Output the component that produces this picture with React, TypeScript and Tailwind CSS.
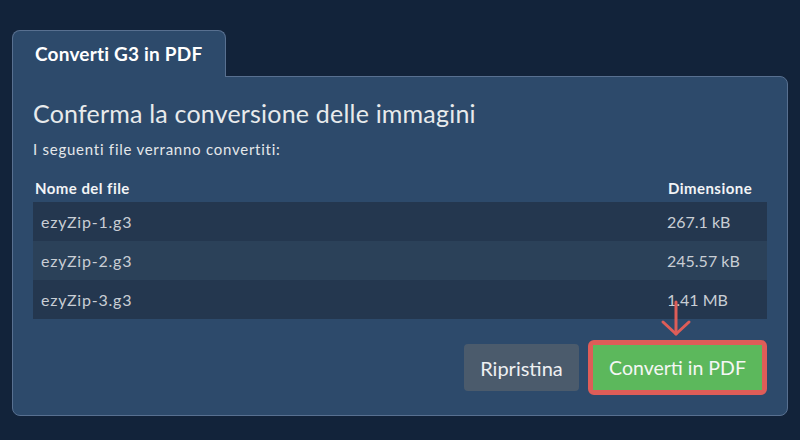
const files = [
  { name: "ezyZip-1.g3", size: "267.1 kB" },
  { name: "ezyZip-2.g3", size: "245.57 kB" },
  { name: "ezyZip-3.g3", size: "1.41 MB" },
];

export default function App() {
  return (
    <div className="h-[440px] w-[800px] bg-[#12233a] px-3 pt-[30px] font-['Lato','Noto_Sans',sans-serif] text-[#e9ecef]">
      <div className="relative z-10 -mb-px flex h-[47px] w-[214px] items-center rounded-t-lg border border-b-0 border-[#587090] bg-[#2d4a6b] px-[22px]">
        <span className="text-[19px] font-bold tracking-[0.2px] text-white">Converti G3 in PDF</span>
      </div>
      <div className="relative rounded-tr-lg rounded-b-lg border border-[#587090] bg-[#2d4a6b] px-5 pb-5 pt-[20px]">
        <h1 className="text-[25px] leading-[32px] tracking-[0.2px] text-[#e8eaec]">Conferma la conversione delle immagini</h1>
        <p className="mt-[10px] text-[15px] leading-5 tracking-[0.75px] text-[#e4e7ea]">I seguenti file verranno convertiti:</p>
        <div className="mt-[19px] flex text-[15px] font-bold leading-5 tracking-[0.45px] text-[#f2f4f6]">
          <div className="flex-1 pl-[2px]">Nome del file</div>
          <div className="w-[108px] pl-[9px]">Dimensione</div>
        </div>
        <div className="mt-[4px]">
          {files.map((file, i) => (
            <div key={file.name} className={`flex h-[39px] items-center text-[16px] text-[#c9ced5] ${i % 2 === 1 ? "bg-[#2b4159]" : "bg-[#24374f]"}`}>
              <div className="flex-1 pl-2 tracking-[0.8px]">{file.name}</div>
              <div className="w-[108px] pl-2">{file.size}</div>
            </div>
          ))}
        </div>
        <div className="mt-[21px] flex items-center justify-end gap-[9px]">
          <button className="h-[47px] w-[115px] rounded bg-[#4b5b6c] text-[20px] text-[#eef0f2]">Ripristina</button>
          <div className="rounded-md border-[5px] border-[#de5d58]">
            <button className="h-[45px] w-[169px] bg-[#5cb85c] text-[19.5px] text-[#f4f6f4]">Converti in PDF</button>
          </div>
        </div>
        <svg className="absolute left-[637px] top-[213px]" width="60" height="60" viewBox="0 0 60 60" fill="none" stroke="#de5d58" strokeWidth="3" strokeLinecap="round" strokeLinejoin="round">
          <path d="M26 12V44" />
          <path d="M13 32L26 44L39 32" />
        </svg>
      </div>
    </div>
  );
}
